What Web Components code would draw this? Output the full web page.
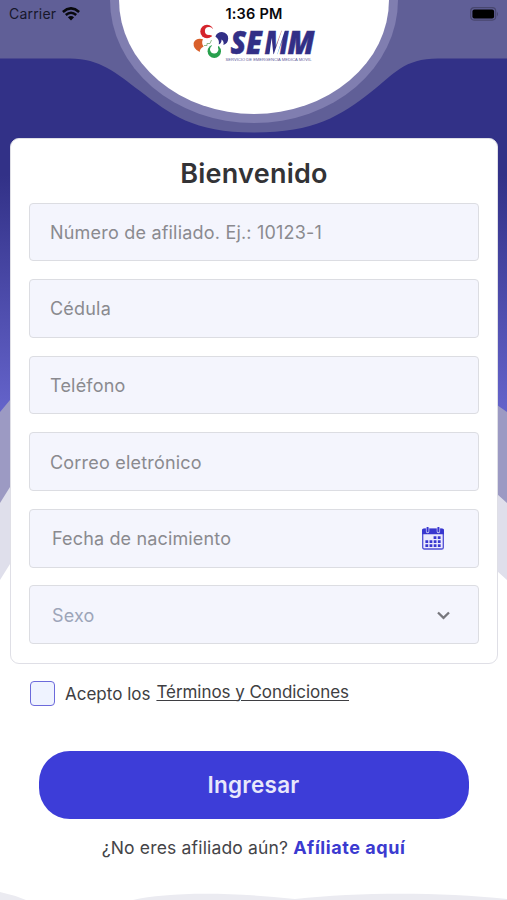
<!DOCTYPE html>
<html lang="es">
<head>
<meta charset="utf-8">
<meta name="viewport" content="width=device-width, initial-scale=1">
<title>SEMM</title>
<style>
  body {
    margin: 0;
    font-family: Inter, "Liberation Sans", sans-serif;
    background: #fff;
  }
</style>
</head>
<body>
<login-screen></login-screen>

<script>
class WaveBackground extends HTMLElement {

  constructor() {
    super();
    this.shadowDOM = this.attachShadow({ mode: "open" });
    this.shadowDOM.innerHTML = `
      <style>
        :host { display: block; }
        svg { display: block; }
      </style>
      <svg width="507" height="900" viewBox="0 0 507 900">
        <defs>
          <linearGradient id="sky" gradientUnits="userSpaceOnUse" x1="0" y1="175" x2="0" y2="410">
            <stop offset="0" stop-color="#323187"/>
            <stop offset="1" stop-color="#6463ca"/>
          </linearGradient>
        </defs>
        <rect width="507" height="420" fill="url(#sky)"/>
        <path fill="#9c9ac3" d="M0 412 L10 400 H497 V405 L507 412 V520 H0Z"/>
        <path fill="#dfdfeb" d="M0 503 L10 487 H497 V494 L507 503 V600 H0Z"/>
        <path fill="#fff" d="M0 580 L10 564 H497 V571 L507 580 V900 H0Z"/>
        <path fill="#605f97" d="M0 0 H507 V58.5 H438 C404 58.5 394 74 371 92 C340 116 315 132.5 254 132.5 C193 132.5 170 114 140 91 C116 73 100 58.5 70 58.5 H0Z"/>
        <ellipse cx="254" cy="0" rx="144" ry="123" fill="#807eb0"/>
        <ellipse cx="254" cy="0" rx="135" ry="114" fill="#fff"/>
        <path fill="#ebebf1" d="M0 892 Q14 895 26 900 H0Z M133 900 C165 893 220 891 295 899 C360 892 440 892 507 899 V900Z"/>
      </svg>`;
  }
}
customElements.define("wave-background", WaveBackground);


class StatusBar extends HTMLElement {

  constructor() {
    super();
    this.shadowDOM = this.attachShadow({ mode: "open" });
    this.shadowDOM.innerHTML = `
      <style>
        :host {
          display: grid;
          grid-template-columns: 1fr auto 1fr;
          align-items: center;
          height: 27px;
          padding: 0 8px 0 9px;
          box-sizing: border-box;
          color: #08080c;
          font-size: 14px;
          line-height: 27px;
        }
        .carrier { display: flex; align-items: center; gap: 6px; letter-spacing: .2px; color: #17172b; }
        .time { font-weight: 600; font-size: 14.5px; letter-spacing: .2px; }
        .battery { justify-self: end; }
        svg { display: block; }
      </style>
      <div class="carrier"><span>Carrier</span>
        <svg width="18" height="14" viewBox="0 0 18 14" fill="none" stroke="#08080c" stroke-width="2.6">
          <path d="M.9 4.9 Q9 -2.2 17.1 4.9"/>
          <path d="M3.8 8 Q9 3.5 14.2 8"/>
          <path d="M9 13.4 L5.9 10.3 Q9 7.7 12.1 10.3Z" fill="#08080c" stroke="none"/>
        </svg>
      </div>
      <div class="time">1:36 PM</div>
      <svg class="battery" width="29" height="14" viewBox="0 0 29 14">
        <rect x=".7" y=".7" width="25" height="12.4" rx="3.5" fill="none" stroke="#48476f" stroke-width="1.2"/>
        <rect x="2.4" y="2.4" width="21.7" height="9" rx="2" fill="#000"/>
        <path d="M27 4.7 Q29 7 27 9.2Z" fill="#48476f"/>
      </svg>`;
  }
}
customElements.define("status-bar", StatusBar);


class SemmLogo extends HTMLElement {

  constructor() {
    super();
    this.shadowDOM = this.attachShadow({ mode: "open" });
    this.shadowDOM.innerHTML = `
      <style>
        :host { display: block; }
        svg { display: block; overflow: visible; }
        .name {
          font: italic 800 32.5px "Open Sans", sans-serif;
          fill: #322f86;
          stroke: #322f86;
          stroke-width: .5px;
        }
      </style>
      <svg width="124" height="40" viewBox="192 23 124 40">
        <circle cx="207" cy="31.5" r="6.7" fill="#d5242c"/>
        <circle cx="209" cy="31" r="4.1" fill="#fff"/>
        <path d="M208 31 L216 27 V37 L210 35Z" fill="#fff"/>
        <path fill="#d9602b" d="M203 39.3 Q196 37.5 193.6 43 Q193 49 199.8 52 Q199.5 48.5 203.6 46.4 Q201 43 203 39.3Z"/>
        <circle cx="214.3" cy="51.3" r="6.7" fill="#28a04d"/>
        <circle cx="214.2" cy="49.4" r="4.2" fill="#fff"/>
        <path d="M211 43 H219 L217 51 L213 50Z" fill="#fff"/>
        <path fill="#322f86" d="M215.4 36.5 Q217 32 222 32 Q228.3 33 228.2 38.5 Q228 43.5 223.4 45 Q224.3 41 221.5 39.5 Q221.8 43 218.8 44.6 Q219.8 39.5 215.4 36.5Z"/>
        <path fill="none" stroke="#77a86f" stroke-width=".8" d="M204 45.5 H207 V43.5 H210 L211.5 40"/>
        <text class="name" y="54.3" x="230.5" textLength="31.5" lengthAdjust="spacingAndGlyphs">SE</text>
        <text class="name" y="54.3" x="264.5" textLength="24" lengthAdjust="spacingAndGlyphs">M</text>
        <path fill="#fff" d="M271.5 38 L273.5 55 H269.5Z M282 30 L285 30 L277 55 H273.5Z"/>
        <text class="name" y="54.3" x="287.5" textLength="27" lengthAdjust="spacingAndGlyphs">M</text>
        <text x="225.5" y="61" textLength="86" lengthAdjust="spacingAndGlyphs" font-family="Liberation Sans" font-size="4" fill="#5c5a98">SERVICIO DE EMERGENCIA MEDICA MOVIL</text>
      </svg>`;
  }
}
customElements.define("semm-logo", SemmLogo);


class FormField extends HTMLElement {

  constructor() {
    super();
    this.shadowDOM = this.attachShadow({ mode: "open" });
    this.shadowDOM.innerHTML = `
      <style>
        :host {
          display: flex;
          align-items: center;
          justify-content: space-between;
          box-sizing: border-box;
          height: 58.8px;
          padding: 1px 34px 0 20px;
          border: 1.5px solid #dcdde2;
          border-radius: 4px;
          background: #f4f5fd;
          color: #8a8a8f;
          font-size: 18px;
          letter-spacing: .2px;
        }
        :host([picker]) { padding-left: 22px; letter-spacing: .15px; }
        :host([muted]) { color: #9da5b9; padding-right: 28px; }
      </style>
      <span><slot></slot></span>
      <slot name="icon"></slot>`;
  }
}
customElements.define("form-field", FormField);


class TermsCheck extends HTMLElement {

  constructor() {
    super();
    this.shadowDOM = this.attachShadow({ mode: "open" });
    this.shadowDOM.innerHTML = `
      <style>
        :host {
          display: flex;
          align-items: center;
          height: 26px;
          font-size: 17px;
          color: #3e3e42;
        }
        .box {
          width: 25px;
          height: 25px;
          box-sizing: border-box;
          border: 1.5px solid #6c6adb;
          border-radius: 4px;
          background: #eff3ff;
          margin-right: 10px;
        }
        .label { margin-right: 6px; padding-top: 1px; }
        .link {
          text-decoration: underline;
          text-decoration-thickness: 1px;
          text-underline-offset: 2px;
          padding-bottom: 3px;
          letter-spacing: -.05px;
        }
      </style>
      <div class="box"></div>
      <span class="label">Acepto los</span>
      <span class="link"><slot></slot></span>`;
  }
}
customElements.define("terms-check", TermsCheck);


class PrimaryButton extends HTMLElement {

  constructor() {
    super();
    this.shadowDOM = this.attachShadow({ mode: "open" });
    this.shadowDOM.innerHTML = `
      <style>
        :host { display: block; }
        button {
          display: block;
          width: 100%;
          height: 68px;
          border: 0;
          padding: 0 1px 0 0;
          border-radius: 31px;
          background: #3d3dd8;
          color: #e8e8fb;
          font: 600 22.5px Inter, "Liberation Sans", sans-serif;
          letter-spacing: .25px;
        }
      </style>
      <button><slot></slot></button>`;
  }
}
customElements.define("primary-button", PrimaryButton);


class LoginScreen extends HTMLElement {

  constructor() {
    super();
    this.shadowDOM = this.attachShadow({ mode: "open" });
    this.render();
  }

  render() {
    this.shadowDOM.innerHTML = `
      <style>
        :host {
          display: grid;
          width: 507px;
          height: 900px;
          overflow: hidden;
        }
        wave-background, .content { grid-area: 1 / 1; }
        .content {
          z-index: 1;
          display: flex;
          flex-direction: column;
        }
        semm-logo { align-self: center; margin-top: -4px; }
        .card {
          box-sizing: border-box;
          height: 526px;
          margin: 74.5px 9px 0 10px;
          padding: 0 18px;
          background: #fff;
          border: 1.5px solid #dfdfe6;
          border-radius: 9px;
        }
        h1 {
          margin: 0;
          height: 64px;
          line-height: 69px;
          font-size: 27px;
          letter-spacing: .25px;
          font-weight: 600;
          text-align: center;
          color: #333336;
        }
        .fields { display: flex; flex-direction: column; gap: 17.8px; }
        terms-check { margin: 16.5px 0 0 30px; }
        primary-button { margin: 44.5px 38px 0 39px; }
        .signup {
          display: flex;
          justify-content: center;
          gap: 5px;
          margin-top: 17.5px;
          font-size: 17.5px;
          letter-spacing: .17px;
          line-height: 24px;
          color: #444448;
        }
        .signup b { font-weight: 700; font-size: 18px; letter-spacing: .55px; color: #3b3ad0; }
        svg { display: block; }
      </style>
      <wave-background></wave-background>
      <div class="content">
        <status-bar></status-bar>
        <semm-logo></semm-logo>
        <div class="card">
          <h1>Bienvenido</h1>
          <div class="fields">
            <form-field>Número de afiliado. Ej.: 10123-1</form-field>
            <form-field>Cédula</form-field>
            <form-field>Teléfono</form-field>
            <form-field>Correo eletrónico</form-field>
            <form-field picker>Fecha de nacimiento
              <svg slot="icon" width="22" height="23" viewBox="0 0 22 23">
                <rect x=".7" y="2.3" width="20.6" height="19.7" rx="1.6" fill="#eceafd" stroke="#504ed4" stroke-width="1.3"/>
                <path d="M0 7.3 V3.3 Q0 1.6 1.7 1.6 H20.3 Q22 1.6 22 3.3 V7.3Z" fill="#3836cf"/>
                <path d="M5.6 1.2 V4.5 M16.4 1.2 V4.5" stroke="#c9c8f5" stroke-width="3.4" stroke-linecap="round"/>
                <path d="M5.6 .9 V4.2 M16.4 .9 V4.2" stroke="#3836cf" stroke-width="1.9" stroke-linecap="round"/>
                <path d="M11.6 10.6 H18.7 M3.4 14.7 H18.7 M3.4 18.7 H18.7" stroke="#3836cf" stroke-width="2.7" stroke-dasharray="2.8 1.35"/>
              </svg>
            </form-field>
            <form-field picker muted>Sexo
              <svg slot="icon" width="13" height="9" viewBox="0 0 13 9">
                <path d="M1 1.5 L6.5 6.8 L12 1.5" fill="none" stroke="#77777d" stroke-width="2.3"/>
              </svg>
            </form-field>
          </div>
        </div>
        <terms-check>Términos y Condiciones</terms-check>
        <primary-button>Ingresar</primary-button>
        <div class="signup"><span>¿No eres afiliado aún?</span><b>Afíliate aquí</b></div>
      </div>`;
  }
}
customElements.define("login-screen", LoginScreen);
</script>
</body>
</html>
